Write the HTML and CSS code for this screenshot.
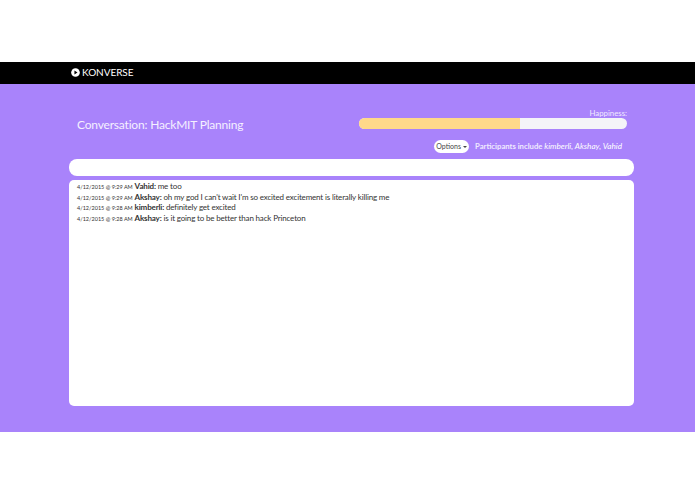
FILE: index.html
```html
<!DOCTYPE html>
<html lang="en">
<head>
<meta charset="utf-8">
<title>Konverse</title>
<link rel="stylesheet" href="styles.css">
</head>
<body>
<header class="navbar">
  <svg class="logo" viewBox="0 0 10 10" width="9" height="9" aria-hidden="true">
    <circle cx="5" cy="5" r="4.8" fill="#fff"/>
    <path d="M3.8 2.8 7.2 5 3.8 7.2Z" fill="#000"/>
  </svg>
  <span class="brand">KONVERSE</span>
</header>
<main class="page">
  <div class="top">
    <h1 class="title">Conversation: HackMIT Planning</h1>
    <div class="side">
      <div class="happy-label">Happiness:</div>
      <div class="bar"><div class="bar-fill" style="width:60%"></div></div>
      <div class="meta">
        <button class="options">Options <span class="caret"></span></button>
        <span class="participants">Participants include <em>kimberli, Akshay, Vahid</em></span>
      </div>
    </div>
  </div>
  <div class="input"></div>
  <section class="log">
    <p class="msg"><small>4/12/2015 @ 9:29 AM</small> <b>Vahid:</b> me too</p>
    <p class="msg"><small>4/12/2015 @ 9:29 AM</small> <b>Akshay:</b> oh my god I can't wait I'm so excited excitement is literally killing me</p>
    <p class="msg"><small>4/12/2015 @ 9:28 AM</small> <b>kimberli:</b> definitely get excited</p>
    <p class="msg"><small>4/12/2015 @ 9:28 AM</small> <b>Akshay:</b> is it going to be better than hack Princeton</p>
  </section>
</main>
</body>
</html>
```
FILE: styles.css
```css
* { box-sizing: border-box; }
html, body { margin: 0; background: #fff; }
body { padding-top: 62px; font-family: Lato, "Liberation Sans", sans-serif; height: 494px; overflow: hidden; }
.navbar { height: 22px; background: #000; color: #fff; display: flex; align-items: center; padding: 0 0 2px 71px; gap: 2px; }
.logo { display: block; }
.brand { font-size: 10px; line-height: 12px; font-weight: 400; letter-spacing: -0.05px; }
.page { height: 348px; background: #a983fb; padding: 24px 61px 0 69px; }
.top { display: flex; justify-content: space-between; height: 51px; padding-right: 7px; }
.title { margin: 8px 0 0 8px; font-size: 12px; line-height: 17px; font-weight: 400; letter-spacing: -0.19px; color: #f5f0ff; }
.side { width: 268px; display: flex; flex-direction: column; }
.happy-label { height: 10px; font-size: 7.8px; line-height: 10px; text-align: right; color: #f0e9ff; }
.bar { height: 11px; border-radius: 6px; background: #f4f4f8; overflow: hidden; }
.bar-fill { height: 100%; background: #ffd98a; }
.meta { display: flex; align-items: center; margin-top: 10px; padding-left: 75px; gap: 6px; height: 14px; }
.options { border: 0; background: #fff; border-radius: 7px; height: 13px; width: 35px; padding: 0; font: 7px/13px Lato, sans-serif; color: #444; white-space: nowrap; }
.caret { display: inline-block; border: 2px solid transparent; border-top-color: #444; border-bottom: 0; vertical-align: 1px; }
.participants { font-size: 7.7px; font-weight: 700; color: #f0e9ff; white-space: nowrap; }
.participants em { font-size: 8.2px; font-weight: 400; color: #fff; }
.input { height: 17px; background: #fff; border-radius: 8px; }
.log { height: 226px; margin-top: 4px; background: #fff; border-radius: 5px; padding: 1px 8px; }
.msg { margin: 0; font-size: 8px; letter-spacing: -0.16px; line-height: 10.5px; color: #333; white-space: nowrap; }
.msg small { font-size: 5.5px; letter-spacing: 0; line-height: 1; }
.msg b { font-weight: 700; }
```
